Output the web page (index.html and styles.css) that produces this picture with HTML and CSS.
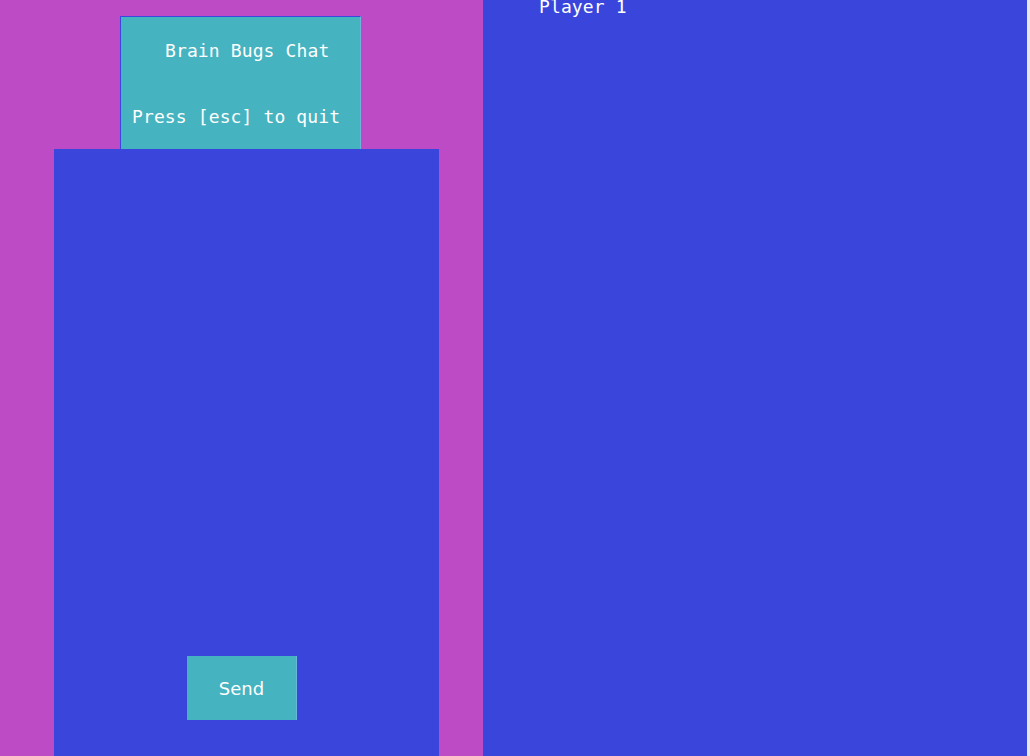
FILE: index.html
```html
<!DOCTYPE html>
<html>
<head>
<meta charset="utf-8">
<link rel="stylesheet" href="styles.css">
</head>
<body>
<div class="app">
  <div class="chat">
    <div class="header">
      <div class="title">Brain Bugs Chat</div>
      <div class="hint">Press [esc] to quit</div>
    </div>
    <div class="panel">
      <button class="send">Send</button>
    </div>
  </div>
  <div class="game">
    <div class="player">Player 1</div>
  </div>
  <div class="scroll"></div>
</div>
</body>
</html>
```

FILE: styles.css
```css
html, body {
  margin: 0;
  padding: 0;
  height: 756px;
  overflow: hidden;
}
body {
  background: #bd4bc5;
}
.app {
  display: flex;
  height: 756px;
}
.chat {
  width: 483px;
  flex: none;
  display: flex;
  flex-direction: column;
  padding-top: 16px;
  box-sizing: border-box;
}
.header {
  margin-left: 120px;
  width: 241px;
  height: 133px;
  box-sizing: border-box;
  background: #45b3c0;
  border-top: 1px solid #3b46de;
  border-left: 1px solid #3b46de;
  border-right: 1px solid #6ab8d8;
  color: #ffffff;
  font-family: "DejaVu Sans Mono", monospace;
  font-size: 18px;
  line-height: 21px;
  letter-spacing: 0.12px;
}
.title {
  padding-left: 44px;
  margin-top: 23px;
}
.hint {
  padding-left: 11px;
  margin-top: 45px;
}
.panel {
  margin-left: 54px;
  width: 385px;
  flex: 1;
  background: #3a45dc;
  display: flex;
  flex-direction: column;
  justify-content: flex-end;
  padding-bottom: 36px;
  box-sizing: border-box;
}
.send {
  margin-left: 133px;
  width: 110px;
  height: 64px;
  background: #45b3c0;
  border: none;
  border-right: 1px solid #6ab8d8;
  color: #ffffff;
  font-family: "DejaVu Sans", sans-serif;
  font-size: 18px;
  padding: 0;
}
.game {
  flex: 1;
  background: #3a45dc;
  color: #ffffff;
  font-family: "DejaVu Sans Mono", monospace;
  font-size: 18px;
  line-height: 21px;
  letter-spacing: 0.12px;
}
.player {
  margin-top: -4px;
  padding-left: 56px;
}
.scroll {
  width: 3px;
  flex: none;
  background: #e6e6ee;
}
```
